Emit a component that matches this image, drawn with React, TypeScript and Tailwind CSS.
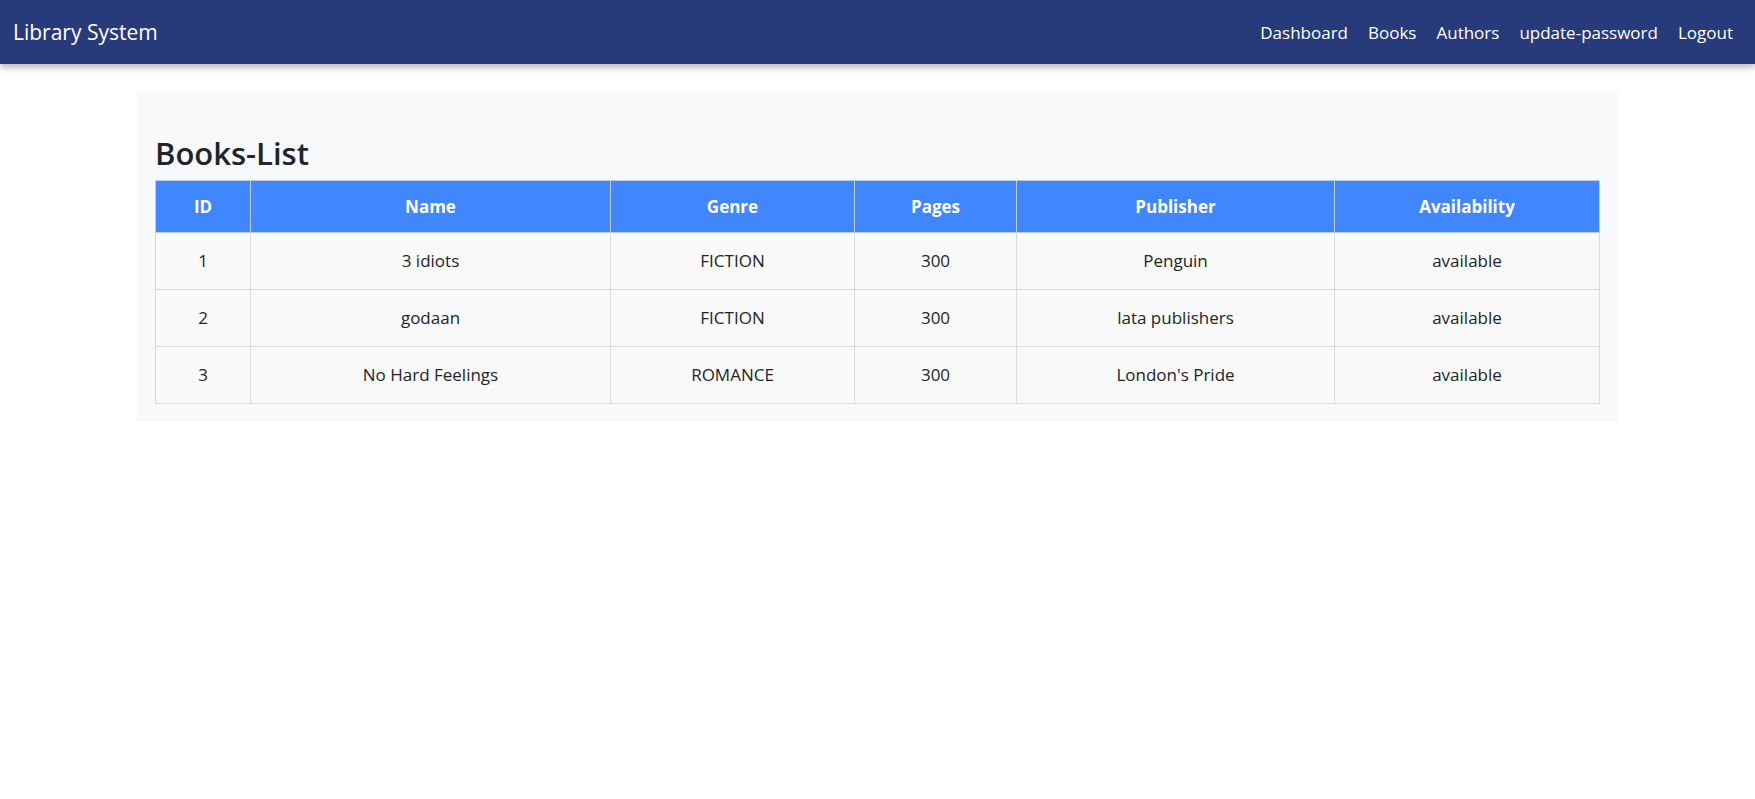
import React from 'react';

interface Book {
  id: number;
  name: string;
  genre: string;
  pages: number;
  publisher: string;
  availability: string;
}

const books: Book[] = [
  { id: 1, name: '3 idiots', genre: 'FICTION', pages: 300, publisher: 'Penguin', availability: 'available' },
  { id: 2, name: 'godaan', genre: 'FICTION', pages: 300, publisher: 'lata publishers', availability: 'available' },
  { id: 3, name: 'No Hard Feelings', genre: 'ROMANCE', pages: 300, publisher: "London's Pride", availability: 'available' },
];

const links = ['Dashboard', 'Books', 'Authors', 'update-password', 'Logout'];

const App: React.FC = () => {
  return (
    <div className="min-h-screen bg-white text-[#212529] font-['Open_Sans',sans-serif]">
      {/* Navbar */}
      <nav className="h-[64px] bg-[#273a79] flex items-center justify-between pl-[13px] pr-[22px] pt-[1px] shadow-[0_4px_6px_rgba(0,0,0,0.25)]">
        <span className="text-[21px] text-white">Library System</span>
        <ul className="flex items-center gap-[20px]">
          {links.map((link) => (
            <li key={link}>
              <a href="#" className="text-[17px] text-white">
                {link}
              </a>
            </li>
          ))}
        </ul>
      </nav>

      {/* Books list */}
      <div className="w-[1481px] mx-auto mt-[28px] bg-[#f8f9fa] px-[18px] pt-[41px] pb-[18px]">
        <h2 className="text-[31px] font-semibold leading-[40px] mb-[7px]">Books-List</h2>
        <table className="w-[1444px] table-fixed border-collapse text-[17px]">
          <colgroup>
            <col className="w-[95px]" />
            <col className="w-[360px]" />
            <col className="w-[244px]" />
            <col className="w-[162px]" />
            <col className="w-[318px]" />
            <col className="w-[265px]" />
          </colgroup>
          <thead>
            <tr className="bg-[#4086ff] text-white h-[52px]">
              {['ID', 'Name', 'Genre', 'Pages', 'Publisher', 'Availability'].map((h) => (
                <th key={h} className="border border-[#b9cdf0] font-bold text-center">
                  {h}
                </th>
              ))}
            </tr>
          </thead>
          <tbody>
            {books.map((b) => (
              <tr key={b.id} className="bg-[#f9f9f9] h-[57px]">
                <td className="border border-[#d9d9d9] text-center">{b.id}</td>
                <td className="border border-[#d9d9d9] text-center">{b.name}</td>
                <td className="border border-[#d9d9d9] text-center">{b.genre}</td>
                <td className="border border-[#d9d9d9] text-center">{b.pages}</td>
                <td className="border border-[#d9d9d9] text-center">{b.publisher}</td>
                <td className="border border-[#d9d9d9] text-center">{b.availability}</td>
              </tr>
            ))}
          </tbody>
        </table>
      </div>
    </div>
  );
};

export default App;
